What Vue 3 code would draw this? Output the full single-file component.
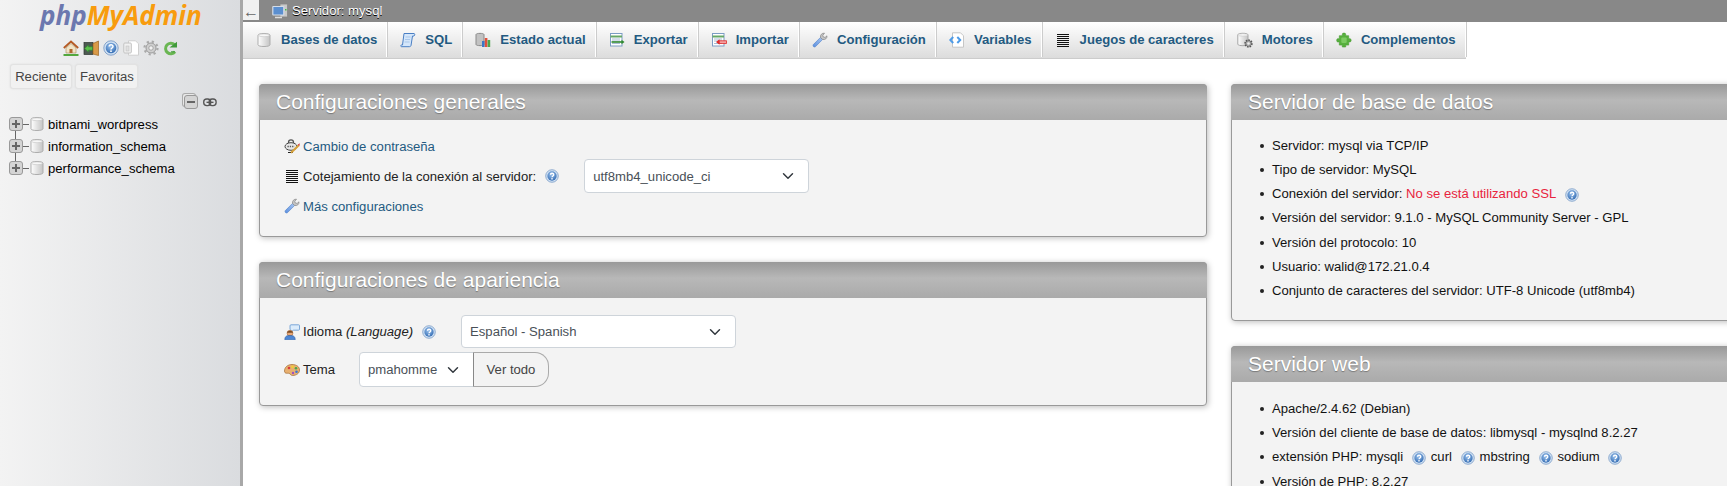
<template>
  <div class="page">
    <svg class="sprite" width="0" height="0">
      <defs>
        <radialGradient id="g-help" cx="45%" cy="35%" r="70%">
          <stop offset="0" stop-color="#9cc3ee" />
          <stop offset="1" stop-color="#2f68b0" />
        </radialGradient>
        <linearGradient id="g-db" x1="0" x2="1" y1="0" y2="0">
          <stop offset="0" stop-color="#fff" />
          <stop offset="1" stop-color="#c4c4c4" />
        </linearGradient>
        <linearGradient id="g-wrench" x1="0" x2="1" y1="1" y2="0">
          <stop offset="0" stop-color="#5a8fe0" />
          <stop offset="1" stop-color="#a9c6f0" />
        </linearGradient>
      </defs>
      <symbol id="i-help" viewBox="0 0 16 16">
        <circle cx="8" cy="8" r="7.2" fill="#cfe0f3" stroke="#6f93c2" stroke-width=".8" />
        <circle cx="8" cy="8" r="5.3" fill="url(#g-help)" />
        <path d="M6.2 6.6c0-2.3 3.8-2.3 3.8-.1 0 1.5-2 1.5-2 3" fill="none" stroke="#fff" stroke-width="1.5" />
        <rect x="7.2" y="10.4" width="1.6" height="1.6" fill="#fff" />
      </symbol>
      <symbol id="i-db" viewBox="0 0 16 16">
        <path d="M2 3.2C2 .9 14 .9 14 3.2v9.600c0 2.300-12 2.300-12 0z" fill="url(#g-db)" stroke="#adadad" />
        <ellipse cx="8" cy="3.300" rx="5.400" ry="1.400" fill="#f7f7f7" stroke="#c4c4c4" stroke-width=".6" />
      </symbol>
      <symbol id="i-sql" viewBox="0 0 16 16">
        <path d="M4 1.500h10c1 0 1 2 0 2.500h-1.500l-1.500 9.500c-.2 1-1 1.200-2 1.200H1.500c-1 0-1-1.700 0-1.700h1z" fill="#d4e6fa" stroke="#4a7fc4" />
        <path d="M5.500 5h5M5 7.500h5M4.600 10h5" stroke="#a9c7ea" />
      </symbol>
      <symbol id="i-status" viewBox="0 0 16 16">
        <path d="M1 2.500C1 1 9 1 9 2.500v10C9 14 1 14 1 12.500z" fill="#c2c2c2" stroke="#8a8a8a" />
        <rect x="7" y="9" width="2.600" height="6" fill="#3b78c8" />
        <rect x="9.800" y="6" width="2.600" height="9" fill="#e0503c" />
        <rect x="12.600" y="8" width="2.600" height="7" fill="#4ea64e" />
      </symbol>
      <symbol id="i-export" viewBox="0 0 16 16">
        <rect x="1.500" y="1.500" width="11.500" height="12.500" fill="#fff" stroke="#7c9cc4" />
        <path d="M1.500 4.500h11.500" stroke="#66a866" stroke-width="2" />
        <path d="M3 7h8M3 9h8M3 11.500h8" stroke="#a9bcd4" />
        <path d="M2.500 10h10.500" stroke="#2f8a2f" stroke-width="1.600" />
        <path d="M12.500 7.800 15.500 10l-3 2.200z" fill="#2f8a2f" />
      </symbol>
      <symbol id="i-import" viewBox="0 0 16 16">
        <rect x="1.500" y="1.500" width="11.500" height="12.500" fill="#fff" stroke="#7c9cc4" />
        <path d="M1.500 4.500h11.500" stroke="#66a866" stroke-width="2" />
        <path d="M3 7h8M3 9h8M3 11.500h8" stroke="#a9bcd4" />
        <rect x="8" y="8.800" width="7.500" height="2.600" fill="#f4a0a0" stroke="#e02c2c" stroke-width=".8" />
        <path d="M8.500 7.300 5 10l3.500 2.700z" fill="#e02c2c" />
      </symbol>
      <symbol id="i-wrench" viewBox="0 0 16 16">
        <path d="M1.300 12.600 8.500 5.400l2.100 2.100-7.200 7.200c-1.400 1-3-.6-2.100-2.100z" fill="url(#g-wrench)" stroke="#4f7fc8" stroke-width=".6" />
        <path d="M8.500 5.400C8 3 10 .8 12.500 1.200L10.800 3.300 11.300 5l1.800.4 1.900-1.600c.3 2.500-1.900 4.300-4.400 3.700z" fill="#c5c5c5" stroke="#858585" stroke-width=".7" />
      </symbol>
      <symbol id="i-vars" viewBox="0 0 16 16">
        <path d="M3.500.8h8l3 3v11.400h-11z" fill="#fff" stroke="#c6c6c6" />
        <path d="M4.200 5 1.300 8l2.900 3M8.300 5l2.900 3-2.900 3" fill="none" stroke="#4d9be8" stroke-width="2" />
      </symbol>
      <symbol id="i-charset" viewBox="0 0 16 16">
        <path d="M2 2.500h12M2 4.500h12M2 6.500h12M2 8.500h12M2 10.500h12M2 12.500h12M2 14.500h12" stroke="#111" />
      </symbol>
      <symbol id="i-engine" viewBox="0 0 16 16">
        <path d="M.8 2.800C.8.800 11 .8 11 2.800v9.400c0 2-10.200 2-10.200 0z" fill="url(#g-db)" stroke="#a5a5a5" />
        <ellipse cx="5.900" cy="2.900" rx="4.600" ry="1.200" fill="#f7f7f7" stroke="#c4c4c4" stroke-width=".6" />
        <circle cx="11.500" cy="11.500" r="3.300" fill="#a8a8a8" stroke="#555" stroke-width="1.800" stroke-dasharray="1.500 1" />
        <circle cx="11.500" cy="11.500" r="1.300" fill="#eee" />
      </symbol>
      <symbol id="i-plugin" viewBox="0 0 16 16">
        <path d="M6.300 3.700V2c0-1.200 3.400-1.200 3.400 0v1.700h3v3h1.400c1.400 0 1.400 3.200 0 3.200h-1.400v3.200h-3V15H6.300v-1.900h-3V9.900H1.600c-1.200 0-1.200-3.200 0-3.200h1.700v-3z" fill="#57b03e" stroke="#4a9c34" stroke-width=".6" />
        <rect x="5.300" y="5.600" width="5.400" height="5.400" rx="1" fill="#7ccb62" />
      </symbol>
      <symbol id="i-pass" viewBox="0 0 16 16">
        <path d="M4.500 6V4.200C4.500 1.200 9.500 1.200 9.500 4.200V6" fill="none" stroke="#555" stroke-width="1.300" />
        <ellipse cx="7" cy="8.500" rx="6" ry="3.800" fill="#e8e8e8" stroke="#444" />
        <path d="M3.500 8.500h7" stroke="#555" stroke-dasharray="1.300 1" stroke-width="1.300" />
        <path d="M4 14.500h5" stroke="#222" />
        <path d="M7 14.800 14.800 7.300" stroke="#d8a23a" stroke-width="2" />
        <path d="M13.600 6.800 15.800 5.300 15.400 8z" fill="#d23a3a" />
      </symbol>
      <symbol id="i-lang" viewBox="0 0 16 16">
        <path d="M7 .8h7.500c1 0 1 .5 1 1V5c0 1-.5 1.200-1 1.200H9.500L6 8.500l1.200-2.300C6.200 6 6 5.500 6 5V1.800c0-.6.400-1 1-1z" fill="#dcecfb" stroke="#5f94cf" stroke-width=".8" />
        <circle cx="6" cy="9.200" r="2.900" fill="#e8a878" stroke="#a5673a" stroke-width=".6" />
        <path d="M3 8.700C3.200 6 8.800 6 9 8.700z" fill="#7a4b24" />
        <path d="M.8 15.800c0-3.800 2.200-4.300 5.200-4.300s5.200.5 5.200 4.300z" fill="#4d86d4" stroke="#2f5fa5" stroke-width=".6" />
      </symbol>
      <symbol id="i-theme" viewBox="0 0 16 16">
        <path d="M8 2.500c4.500 0 7.500 2.300 7.500 5.500s-3 5.500-7 5.500c-2.500 0-2-2-3.500-2.200-1.500-.2-4.500.7-4.500-2.300C.5 5 4 2.500 8 2.500z" fill="#e8b070" stroke="#a06a30" stroke-width=".7" />
        <circle cx="5" cy="6" r="1.300" fill="#d83a3a" />
        <circle cx="8.500" cy="4.800" r="1.300" fill="#f0d030" />
        <circle cx="12" cy="6.200" r="1.300" fill="#4ca64c" />
        <circle cx="12.500" cy="9.800" r="1.300" fill="#3a78d0" />
        <circle cx="9" cy="11" r="1.200" fill="#a050c0" />
      </symbol>
      <symbol id="i-server" viewBox="0 0 16 16">
        <rect x="8" y="1" width="7.500" height="13" fill="#c8c8c8" stroke="#868686" stroke-width=".8" />
        <rect x=".8" y="3.500" width="11" height="8.500" rx=".5" fill="#5b8fd0" stroke="#d5dde8" stroke-width="1.200" />
        <path d="M3 14.500h7" stroke="#ddd" stroke-width="1.500" />
        <rect x="13" y="6" width="1.500" height="1.500" fill="#46c046" />
      </symbol>
      <symbol id="i-home" viewBox="0 0 16 16">
        <path d="M.8 8 8 1.500 15.200 8" fill="none" stroke="#b55a24" stroke-width="1.800" />
        <path d="M3 8 8 3.500 13 8v5H3z" fill="#f1e4c7" stroke="#a58a5a" stroke-width=".6" />
        <rect x="6.500" y="9" width="3" height="4" fill="#b06a30" />
        <path d="M.5 15h15" stroke="#53a83e" stroke-width="2" />
      </symbol>
      <symbol id="i-exit" viewBox="0 0 16 16">
        <rect x="1" y="2.500" width="9" height="12" fill="#4d5a52" stroke="#2d352f" stroke-width=".7" />
        <path d="M10 3.500 15.500 1v14.500L10 14z" fill="#d99a48" stroke="#9c6522" stroke-width=".7" />
        <path d="M9.500 6.800H5.500V5L1.500 8.500 5.500 12v-1.800h4z" fill="#5dc04d" stroke="#2f8a2f" stroke-width=".6" />
      </symbol>
      <symbol id="i-docs" viewBox="0 0 16 16">
        <path d="M5.500.8h7l3 3v11.400h-10z" fill="#fff" stroke="#cfcfcf" />
        <rect x=".8" y="3" width="7.500" height="10" rx="1" fill="#f1f1f1" stroke="#c2c2c2" />
        <rect x="3" y="6" width="3" height="5" fill="#e0e0e0" stroke="#bdbdbd" stroke-width=".5" />
      </symbol>
      <symbol id="i-gear" viewBox="0 0 16 16">
        <circle cx="8" cy="8" r="5" fill="#cfcfcf" stroke="#9a9a9a" stroke-width="1" />
        <circle cx="8" cy="8" r="6.500" fill="none" stroke="#a9a9a9" stroke-width="2.200" stroke-dasharray="2.200 2.900" />
        <circle cx="8" cy="8" r="2.200" fill="#f2f2f2" stroke="#8f8f8f" stroke-width=".7" />
      </symbol>
      <symbol id="i-reload" viewBox="0 0 16 16">
        <path d="M11.500 4.600A5.300 5.300 0 1 0 12 11.800" fill="none" stroke="#6ab653" stroke-width="3" />
        <path d="M6.500 7.500h7.500V1.800z" fill="#3f9a3a" />
        <path d="M8 11.800h4" stroke="#3f9a3a" />
      </symbol>
      <symbol id="i-link" viewBox="0 0 16 10">
        <rect x=".8" y="1" width="8" height="7.500" rx="3.500" fill="none" stroke="#555" stroke-width="1.500" />
        <rect x="7" y="1" width="8" height="7.500" rx="3.500" fill="none" stroke="#555" stroke-width="1.500" />
        <path d="M4 4.800h8" stroke="#555" stroke-width="1.500" />
      </symbol>
    </svg>

    <aside class="side">
      <div class="logo"><span class="logo-php">php</span><span class="logo-my">MyAdmin</span></div>
      <div class="quick">
        <svg v-for="n in quickIcons" :key="n" class="ic"><use :href="'#i-' + n" /></svg>
      </div>
      <div class="side-btns">
        <button class="side-btn">Reciente</button>
        <button class="side-btn">Favoritas</button>
      </div>
      <div class="tree-tools">
        <span class="collapse-box"><span class="minus"></span></span>
        <svg class="link-ic"><use href="#i-link" /></svg>
      </div>
      <ul class="tree">
        <li v-for="db in databases" :key="db" class="tree-row">
          <span class="plus"></span>
          <span class="dash"></span>
          <svg class="ic-db"><use href="#i-db" /></svg>
          <span>{{ db }}</span>
        </li>
      </ul>
    </aside>

    <main class="main">
      <div class="topbar">
        <span class="back">←</span>
        <svg class="ic server"><use href="#i-server" /></svg>
        <span class="crumb">Servidor: mysql</span>
      </div>
      <nav class="tabs">
        <a v-for="t in tabs" :key="t.label" class="tab">
          <svg class="ic"><use :href="'#i-' + t.icon" /></svg>
          {{ t.label }}
        </a>
      </nav>

      <div class="content">
        <div class="col">
          <section class="panel">
            <h2>Configuraciones generales</h2>
            <div class="panel-body general">
              <div class="row row-link">
                <svg class="ic"><use href="#i-pass" /></svg>
                <a>Cambio de contraseña</a>
              </div>
              <div class="row row-collation">
                <svg class="ic"><use href="#i-charset" /></svg>
                <span>Cotejamiento de la conexión al servidor:</span>
                <svg class="help help-coll"><use href="#i-help" /></svg>
                <select class="sel sel-coll"><option>utf8mb4_unicode_ci</option></select>
              </div>
              <div class="row row-link">
                <svg class="ic"><use href="#i-wrench" /></svg>
                <a>Más configuraciones</a>
              </div>
            </div>
          </section>

          <section class="panel">
            <h2>Configuraciones de apariencia</h2>
            <div class="panel-body look">
              <div class="row row-lang">
                <svg class="ic"><use href="#i-lang" /></svg>
                <span>Idioma <i>(Language)</i></span>
                <svg class="help help-lang"><use href="#i-help" /></svg>
                <select class="sel sel-lang"><option>Español - Spanish</option></select>
              </div>
              <div class="row row-theme">
                <svg class="ic"><use href="#i-theme" /></svg>
                <span>Tema</span>
                <select class="sel sel-theme"><option>pmahomme</option></select>
                <button class="view-all">Ver todo</button>
              </div>
            </div>
          </section>
        </div>

        <div class="col">
          <section class="panel">
            <h2>Servidor de base de datos</h2>
            <ul class="info">
              <li>Servidor: mysql via TCP/IP</li>
              <li>Tipo de servidor: MySQL</li>
              <li>Conexión del servidor: <span class="warn">No se está utilizando SSL</span>
                <svg class="help help-li"><use href="#i-help" /></svg>
              </li>
              <li>Versión del servidor: 9.1.0 - MySQL Community Server - GPL</li>
              <li>Versión del protocolo: 10</li>
              <li>Usuario: walid@172.21.0.4</li>
              <li>Conjunto de caracteres del servidor: UTF-8 Unicode (utf8mb4)</li>
            </ul>
          </section>

          <section class="panel">
            <h2>Servidor web</h2>
            <ul class="info info-web">
              <li>Apache/2.4.62 (Debian)</li>
              <li>Versión del cliente de base de datos: libmysql - mysqlnd 8.2.27</li>
              <li>extensión PHP: mysqli
                <svg class="help help-ext"><use href="#i-help" /></svg>curl
                <svg class="help help-ext"><use href="#i-help" /></svg>mbstring
                <svg class="help help-ext"><use href="#i-help" /></svg>sodium
                <svg class="help help-ext"><use href="#i-help" /></svg>
              </li>
              <li>Versión de PHP: 8.2.27</li>
            </ul>
          </section>
        </div>
      </div>
    </main>
  </div>
</template>

<script setup>
const quickIcons = ["home", "exit", "help", "docs", "gear", "reload"];

const databases = ["bitnami_wordpress", "information_schema", "performance_schema"];

const tabs = [
  { label: "Bases de datos", icon: "db" },
  { label: "SQL", icon: "sql" },
  { label: "Estado actual", icon: "status" },
  { label: "Exportar", icon: "export" },
  { label: "Importar", icon: "import" },
  { label: "Configuración", icon: "wrench" },
  { label: "Variables", icon: "vars" },
  { label: "Juegos de caracteres", icon: "charset" },
  { label: "Motores", icon: "engine" },
  { label: "Complementos", icon: "plugin" },
];
</script>

<style>
html,
body {
  margin: 0;
  height: 486px;
  overflow: hidden;
  background: #fff;
}
</style>

<style scoped>
.page {
  display: flex;
  width: 2400px;
  height: 486px;
  font-family: "Liberation Sans", Arial, sans-serif;
  font-size: 13.12px;
  color: #222;
}

.sprite {
  position: absolute;
}

.ic {
  width: 16px;
  height: 16px;
  flex: none;
}

/* Barra lateral */
.side {
  width: 243px;
  flex: none;
  box-sizing: border-box;
  background: linear-gradient(to right, #f3f3f3, #dadcdf);
  border-right: 3px solid #a8a8a8;
}

.logo {
  height: 31px;
  padding-left: 40px;
  font-family: "Open Sans", sans-serif;
  font-size: 26px;
  line-height: 30px;
  font-style: italic;
  font-weight: 700;
  white-space: nowrap;
}

.logo-php {
  color: #6c78af;
}

.logo-my {
  color: #f89c0e;
}

.quick {
  display: flex;
  gap: 4px;
  padding: 9px 0 0 63px;
  height: 16px;
}

.side-btns {
  display: flex;
  gap: 3px;
  padding: 8px 0 0 10px;
}

.side-btn {
  height: 25px;
  padding: 0 4px;
  font: 13.12px "Liberation Sans", Arial, sans-serif;
  color: #444;
  background: #f1f1f1;
  border: 1px solid #e2e2e2;
  border-radius: 3px;
  box-shadow: 0 0 2px #ddd;
}

.side-btn:first-child {
  width: 62px;
}

.side-btn:last-child {
  width: 63px;
}

.tree-tools {
  display: flex;
  align-items: center;
  gap: 5px;
  padding: 5px 0 0 184px;
  height: 16px;
}

.collapse-box {
  display: flex;
  align-items: center;
  justify-content: center;
  width: 12px;
  height: 12px;
  background: #d4d4d4;
  border: 1px solid #999;
  border-radius: 3px;
  box-shadow: -2px -2px 0 -1px #e8e8e8, -2px -2px 0 0 #aaa;
}

.minus {
  width: 8px;
  height: 2px;
  background: #666;
}

.link-ic {
  width: 14px;
  height: 9px;
}

.tree {
  list-style: none;
  margin: 0;
  padding: 3px 0 0 9px;
}

.tree-row {
  position: relative;
  display: flex;
  align-items: center;
  height: 22px;
  color: #000;
}

.tree-row:not(:last-child)::before {
  content: "";
  position: absolute;
  left: 6px;
  top: 11px;
  height: 22px;
  width: 1px;
  background: #666;
}

.plus {
  position: relative;
  z-index: 1;
  width: 12px;
  height: 12px;
  flex: none;
  border: 1px solid #999;
  border-radius: 3px;
  background:
    linear-gradient(#666, #666) center / 8px 2px no-repeat,
    linear-gradient(#666, #666) center / 2px 8px no-repeat,
    #d4d4d4;
}

.dash {
  width: 6px;
  height: 1px;
  flex: none;
  background: #666;
}

.ic-db {
  width: 16px;
  height: 16px;
  flex: none;
  margin-right: 3px;
}

/* Barra superior y pestañas */
.main {
  flex: 1;
  min-width: 0;
}

.topbar {
  display: flex;
  align-items: flex-start;
  height: 22px;
  background: #888;
}

.back {
  width: 16px;
  height: 20px;
  line-height: 24px;
  text-align: center;
  background: #f1f1f1;
  color: #666;
  font-family: "Liberation Sans", sans-serif;
  font-size: 16px;
  overflow: hidden;
}

.server {
  margin: 3px 4px 0 13px;
}

.crumb {
  line-height: 22px;
  color: #fff;
  text-shadow: 0 1px 0 #000;
}

.tabs {
  display: flex;
  width: fit-content;
  height: 37px;
  box-sizing: border-box;
  padding-bottom: 1px;
  background: linear-gradient(#fff, #dcdcdc);
  border-bottom: 1px solid #ccc;
}

.tab {
  display: flex;
  align-items: center;
  gap: 9px;
  padding: 0 9.1px 0 13px;
  border-right: 1px solid #fff;
  box-shadow: 1px 0 0 #ccc;
  color: #235a81;
  font-weight: bold;
}

/* Paneles */
.content {
  display: flex;
  gap: 24px;
  padding: 25px 0 0 16px;
}

.col {
  width: 948px;
  flex: none;
}

.panel {
  margin-bottom: 25px;
  background: #f3f3f3;
  border: 1px solid #999;
  border-radius: 4px;
  box-shadow: 1px 1px 6px #bbb;
}

h2 {
  margin: -1px -1px 0;
  height: 36px;
  padding-left: 17px;
  font-size: 21px;
  font-weight: normal;
  line-height: 36px;
  color: #fff;
  text-shadow: 0 1px 1px #777;
  background: linear-gradient(#999, #b8b8b8 45%, #aaa);
  border-radius: 4px 4px 0 0;
}

.panel-body {
  padding-left: 24px;
}

.general {
  height: 116px;
}

.look {
  height: 107px;
}

.row {
  display: flex;
  align-items: center;
}

.row .ic {
  margin-right: 3px;
}

.row-link {
  height: 30px;
}

.row-link a {
  color: #235a81;
}

.general .row-link:first-child {
  padding-top: 11px;
}

.row-collation {
  height: 30px;
}

.help {
  width: 14px;
  height: 14px;
  flex: none;
}

.help-coll,
.help-lang {
  margin: 0 25px 0 9px;
}

.sel {
  appearance: none;
  box-sizing: border-box;
  font: 13.12px "Liberation Sans", Arial, sans-serif;
  color: #495057;
  background: #fff url("data:image/svg+xml,%3csvg xmlns='http://www.w3.org/2000/svg' viewBox='0 0 16 16'%3e%3cpath fill='none' stroke='%23343a40' stroke-linecap='round' stroke-linejoin='round' stroke-width='2' d='M2 5l6 6 6-6'/%3e%3c/svg%3e") no-repeat right 12px center / 16px 12px;
  border: 1px solid #ced4da;
  border-radius: 4px;
  padding: 0 8px;
}

.sel-coll {
  width: 225px;
  height: 34px;
}

.row-lang {
  padding-top: 17px;
}

.sel-lang {
  width: 275px;
  height: 33px;
}

.row-theme {
  padding-top: 4px;
}

.row-theme > span {
  width: 37px;
}

.sel-theme {
  width: 115px;
  height: 35px;
  margin-left: 19px;
  border-radius: 4px 0 0 4px;
}

.view-all {
  width: 76px;
  height: 35px;
  font: 13.12px "Liberation Sans", Arial, sans-serif;
  color: #444;
  background: #f3f3f3;
  border: 1px solid #aaa;
  border-left-color: #888;
  border-radius: 0 14px 14px 0;
  margin-left: -1px;
}

.info {
  margin: 0;
  padding: 14px 0 17px 40px;
  list-style: none;
}

.info-web {
  padding-top: 15px;
}

.info li {
  height: 24.17px;
  line-height: 24.17px;
  color: #111;
}

.info li::before {
  content: "";
  display: inline-block;
  width: 4px;
  height: 4px;
  margin: 0 8px 2px -12px;
  border-radius: 50%;
  background: #222;
}

.warn {
  color: #e8233d;
}

.help-li {
  vertical-align: middle;
  margin-left: 9px;
}

.help-ext {
  vertical-align: middle;
  margin: 0 5px;
}
</style>
